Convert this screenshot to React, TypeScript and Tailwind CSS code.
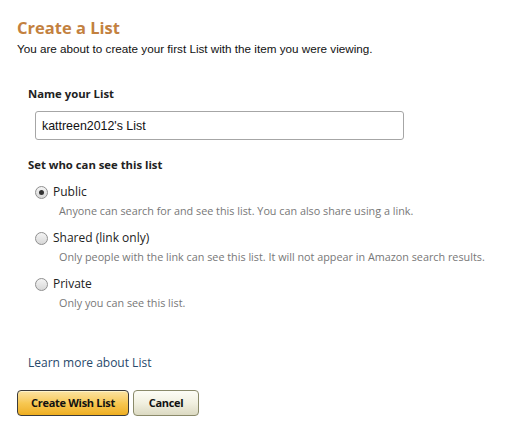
import React, { useState } from 'react';

const options = [
  { id: 'public', label: 'Public', desc: 'Anyone can search for and see this list. You can also share using a link.' },
  { id: 'shared', label: 'Shared (link only)', desc: 'Only people with the link can see this list. It will not appear in Amazon search results.' },
  { id: 'private', label: 'Private', desc: 'Only you can see this list.' },
];

export default function App() {
  const [name, setName] = useState("kattreen2012's List");
  const [privacy, setPrivacy] = useState('public');

  return (
    <div className="w-[528px] h-[429px] bg-white overflow-hidden px-[17px] pt-[15px] font-['Open_Sans',sans-serif]">
      {/* Header */}
      <h1 className="text-[16.5px] font-bold leading-[26px] text-[#c3813f]">Create a List</h1>
      <p className="text-[11.7px] leading-[16px] text-[#111] font-['Liberation_Sans',Arial,sans-serif]">
        You are about to create your first List with the item you were viewing.
      </p>

      <div className="pl-[11px] mt-[29px]">
        <div className="text-[11.3px] font-bold leading-[16px] text-[#222]">Name your List</div>
        <input
          value={name}
          onChange={(e) => setName(e.target.value)}
          className="block mt-[9px] ml-[7px] w-[369px] h-[29px] px-[6px] border border-[#a6a6a6] rounded-[3px] text-[12.4px] text-[#111] font-['Liberation_Sans',Arial,sans-serif] outline-none"
        />

        <div className="mt-[17px] text-[11.3px] font-bold leading-[16px] text-[#222]">Set who can see this list</div>

        <div className="mt-[11px] ml-[7px] flex flex-col gap-[12px]">
          {options.map((o) => (
            <label key={o.id} className="block cursor-pointer">
              <div className="flex items-center gap-[5px] h-[16px]">
                <span className="w-[13px] h-[13px] rounded-full border border-[#8f8f8f] bg-gradient-to-b from-[#f4f4f4] to-[#d8d8d8] flex items-center justify-center">
                  {privacy === o.id && <span className="w-[5px] h-[5px] rounded-full bg-[#333]" />}
                </span>
                <input
                  type="radio"
                  name="privacy"
                  className="hidden"
                  checked={privacy === o.id}
                  onChange={() => setPrivacy(o.id)}
                />
                <span className="text-[12px] leading-[16px] text-[#222]">{o.label}</span>
              </div>
              <div className="mt-[3px] pl-[24px] text-[10.8px] leading-[15px] text-[#777]">{o.desc}</div>
            </label>
          ))}
        </div>

        <a href="#" className="block mt-[45px] text-[12px] leading-[16px] text-[#27496b]">
          Learn more about List
        </a>
      </div>

      {/* Buttons */}
      <div className="mt-[19px] flex gap-[4px]">
        <button className="w-[112px] h-[26px] rounded-[4px] border border-[#3b3b3b] bg-gradient-to-b from-[#fbe3a1] via-[#f7c852] to-[#eeae1e] text-[11px] tracking-[-0.3px] font-bold text-[#111] shadow-[inset_0_1px_0_#fff3c9]">
          Create Wish List
        </button>
        <button className="w-[66px] h-[26px] rounded-[4px] border border-[#8a8a6a] bg-gradient-to-b from-[#fdfdf6] via-[#f1f0e0] to-[#dcdac2] text-[11px] tracking-[-0.3px] font-bold text-[#111]">
          Cancel
        </button>
      </div>
    </div>
  );
}
